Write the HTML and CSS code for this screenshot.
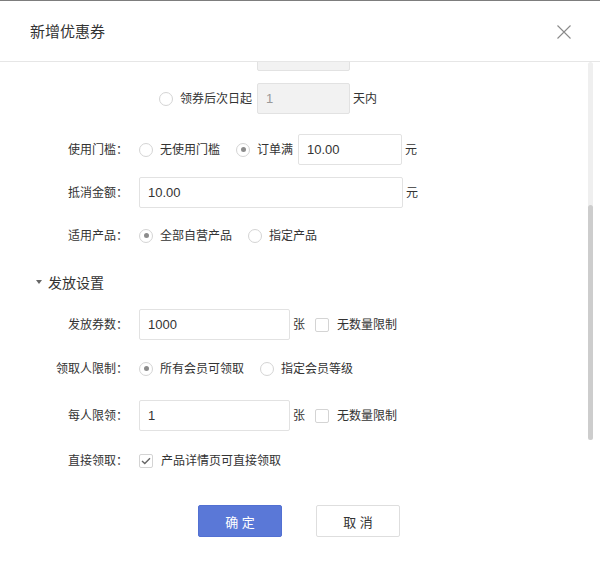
FILE: index.html
```html
<!DOCTYPE html>
<html lang="zh">
<head>
<meta charset="utf-8">
<title>新增优惠券</title>
<link rel="stylesheet" href="styles.css">
</head>
<body>
<div class="dialog">
  <div class="dlg-header">
    <span class="dlg-title">新增优惠券</span>
    <span class="dlg-close">
      <svg width="14" height="14" viewBox="0 0 14 14"><path d="M0.5 0.5 L13.5 13.5 M13.5 0.5 L0.5 13.5" stroke="#8a8a8a" stroke-width="1.1" fill="none"/></svg>
    </span>
  </div>
  <div class="dlg-body">
    <div class="content">
      <div class="row row-partial">
        <span class="input input-disabled w93"></span>
      </div>
      <div class="row row-sub">
        <span class="radio"></span>
        <span class="opt-text">领券后次日起</span>
        <span class="input input-disabled w93 ml5">1</span>
        <span class="unit">天内</span>
      </div>
      <div class="row gap20">
        <span class="label">使用门槛：</span>
        <span class="radio"></span>
        <span class="opt-text">无使用门槛</span>
        <span class="radio checked"></span>
        <span class="opt-text">订单满</span>
        <span class="input w104 ml-tight">10.00</span>
        <span class="unit">元</span>
      </div>
      <div class="row">
        <span class="label">抵消金额：</span>
        <span class="input w264">10.00</span>
        <span class="unit">元</span>
      </div>
      <div class="row">
        <span class="label">适用产品：</span>
        <span class="radio checked"></span>
        <span class="opt-text">全部自营产品</span>
        <span class="radio"></span>
        <span class="opt-text">指定产品</span>
      </div>
      <div class="section-title">
        <span class="caret"></span>
        <span>发放设置</span>
      </div>
      <div class="row gap17">
        <span class="label">发放券数：</span>
        <span class="input w151">1000</span>
        <span class="unit">张</span>
        <span class="checkbox"></span>
        <span class="opt-text">无数量限制</span>
      </div>
      <div class="row gap13">
        <span class="label">领取人限制：</span>
        <span class="radio checked"></span>
        <span class="opt-text">所有会员可领取</span>
        <span class="radio"></span>
        <span class="opt-text">指定会员等级</span>
      </div>
      <div class="row gap16">
        <span class="label">每人限领：</span>
        <span class="input w151">1</span>
        <span class="unit">张</span>
        <span class="checkbox"></span>
        <span class="opt-text">无数量限制</span>
      </div>
      <div class="row gap14">
        <span class="label">直接领取：</span>
        <span class="checkbox checked">
          <svg width="10" height="8" viewBox="0 0 10 8"><path d="M1 4 L3.8 6.6 L9 1.2" stroke="#666" stroke-width="1.4" fill="none"/></svg>
        </span>
        <span class="opt-text">产品详情页可直接领取</span>
      </div>
      <div class="actions">
        <span class="btn btn-primary">确 定</span>
        <span class="btn btn-default">取 消</span>
      </div>
    </div>
    <div class="scrollbar"><div class="thumb"></div></div>
  </div>
</div>
</body>
</html>
```
FILE: styles.css
```css
* { box-sizing: border-box; }
html, body { margin: 0; padding: 0; background: #fff; }
body {
  font-family: "Liberation Sans", "Noto Sans CJK SC", sans-serif;
  font-size: 12px;
  color: #333;
}
.dialog {
  position: relative;
  width: 600px;
  height: 561px;
  border-top: 1px solid #7d7d7d;
  overflow: hidden;
}
.dlg-header {
  height: 61px;
  border-bottom: 1px solid #e6e6e6;
  display: flex;
  align-items: center;
  justify-content: space-between;
  padding: 0 29px 0 30px;
}
.dlg-title {
  font-size: 15px;
  color: #333;
  line-height: 20px;
  margin-top: 1px;
}
.dlg-close { display: flex; width: 14px; height: 14px; margin-top: 2px; }
.dlg-body {
  position: relative;
  height: 498px;
  overflow: hidden;
}
.content { margin-top: -22px; }
.row {
  display: flex;
  align-items: center;
  height: 31px;
  margin-top: 12px;
}
.row-partial { margin-top: 0; padding-left: 257px; }
.row-sub { padding-left: 159px; }
.gap20 { margin-top: 20px; }
.gap17 { margin-top: 17px; }
.gap13 { margin-top: 13px; }
.gap16 { margin-top: 16px; }
.gap14 { margin-top: 14px; }
.label {
  width: 128px;
  text-align: right;
  margin-right: 11px;
  line-height: 16px;
  flex: none;
}
.radio {
  width: 14px;
  height: 14px;
  border: 1px solid #d4d4d4;
  border-radius: 50%;
  flex: none;
  display: flex;
  align-items: center;
  justify-content: center;
  margin-right: 7px;
}
.radio.checked::after {
  content: "";
  width: 5px;
  height: 5px;
  border-radius: 50%;
  background: #8c8c8c;
}
.opt-text { line-height: 16px; margin-right: 16px; white-space: nowrap; }
.row-sub .opt-text { margin-right: 0; }
.input {
  height: 31px;
  border: 1px solid #e2e2e2;
  border-radius: 2px;
  display: flex;
  align-items: center;
  padding-left: 8px;
  font-size: 13px;
  color: #333;
  flex: none;
  background: #fff;
}
.input-disabled { background: #f2f2f2; color: #999; }
.w93 { width: 93px; }
.w104 { width: 104px; }
.w264 { width: 264px; }
.w151 { width: 151px; }
.ml5 { margin-left: 5px; }
.ml-tight { margin-left: -11px; }
.unit { margin-left: 3px; line-height: 16px; }
.row .unit + .checkbox { margin-left: 10px; }
.checkbox {
  width: 14px;
  height: 14px;
  border: 1px solid #d4d4d4;
  border-radius: 2px;
  flex: none;
  margin-right: 8px;
  display: flex;
  align-items: center;
  justify-content: center;
}
.section-title {
  display: flex;
  align-items: center;
  height: 20px;
  margin-top: 21px;
  padding-left: 36px;
  font-size: 14px;
  color: #333;
}
.caret {
  width: 0;
  height: 0;
  border-left: 3.5px solid transparent;
  border-right: 3.5px solid transparent;
  border-top: 4px solid #666;
  margin-right: 6px;
}
.actions {
  display: flex;
  margin-top: 29px;
  padding-left: 198px;
  gap: 34px;
}
.btn {
  width: 84px;
  height: 32px;
  border-radius: 2px;
  display: flex;
  align-items: center;
  justify-content: center;
  font-size: 13px;
}
.btn-primary { background: #5a78d7; color: #fff; border: 1px solid #5270d2; }
.btn-default { background: #fff; color: #333; border: 1px solid #dedede; }
.scrollbar {
  position: absolute;
  top: 0;
  right: 7px;
  width: 5px;
  height: 378px;
  background: #efefef;
  border-radius: 3px;
}
.thumb {
  position: absolute;
  left: 0;
  bottom: 0;
  width: 5px;
  height: 235px;
  background: #cdcdcd;
  border-radius: 3px;
}
```
